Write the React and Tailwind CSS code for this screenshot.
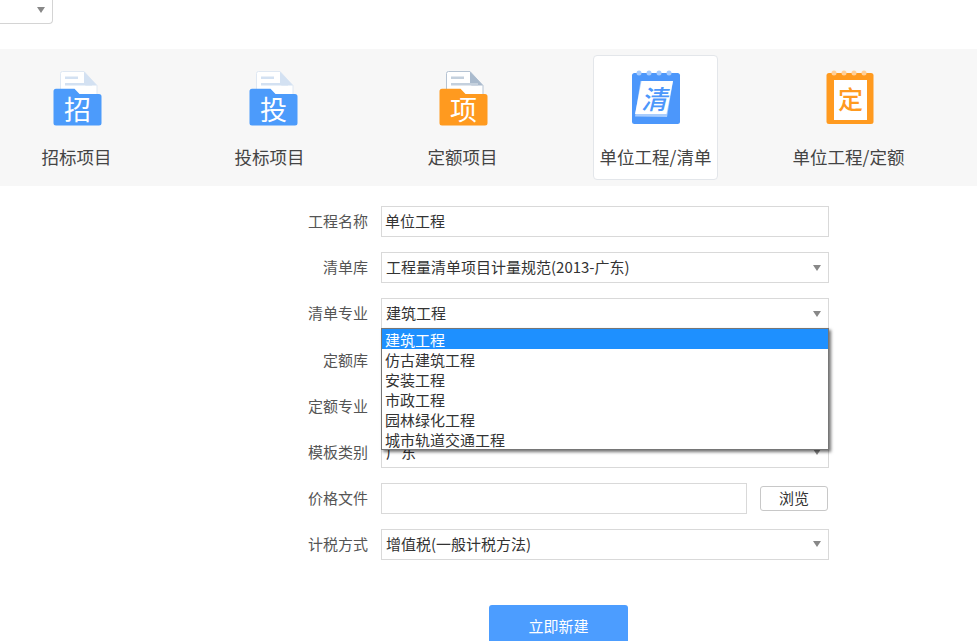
import React from 'react'

const FolderIcon = ({ glyph, main, edge, fold, line, className = '' }) => (
  <svg width="60" height="60" viewBox="0 0 60 60" className={className}>
    <path d="M15.5 3.5h21.5l13 14v20H13.5V5.5a2 2 0 0 1 2-2z" fill="#fff" stroke={edge} strokeWidth="1" />
    <path d="M37 3.5l13 14H39a2 2 0 0 1-2-2z" fill={fold} />
    <rect x="18" y="8.5" width="13" height="2.5" fill={line} />
    <rect x="18" y="15" width="27" height="2.5" fill={line} />
    <path d="M9 20.7h18.5l5 5.3h19.5a2.5 2.5 0 0 1 2.5 2.5V55a2.5 2.5 0 0 1-2.5 2.5H9A2.5 2.5 0 0 1 6.5 55V23.2a2.5 2.5 0 0 1 2.5-2.5z" fill={main} />
    <text x="30.5" y="52" textAnchor="middle" fontSize="27" fill="#fff" fontFamily="'Noto Sans CJK SC', sans-serif">{glyph}</text>
  </svg>
)

const Rings = ({ fill, xs }) => xs.map((x) => <circle key={x} cx={x} cy="5" r="2.5" fill={fill} />)

const ListIcon = () => (
  <svg width="60" height="60" viewBox="0 0 60 60">
    <rect x="6" y="5" width="48" height="51" rx="2.5" fill="#4c97fb" />
    <Rings fill="#a6cbfd" xs={[13, 23, 33, 43]} />
    <path d="M9 48.5 14.5 13H47L41 49z" fill="#a9cdfd" />
    <path d="M9 46 15.5 13H47l-6.5 33z" fill="#fff" />
    <text x="28" y="41" textAnchor="middle" fontSize="26" fontStyle="italic" fontWeight="500" fill="#4c97fb" fontFamily="'Noto Sans CJK SC', sans-serif">清</text>
  </svg>
)

const QuotaIcon = () => (
  <svg width="60" height="60" viewBox="0 0 60 60" className="ml-[2px]">
    <rect x="6.5" y="5" width="47" height="51" rx="2.5" fill="#ff9a1f" />
    <Rings fill="#ffd09a" xs={[14, 24, 34, 44]} />
    <rect x="14" y="12" width="33" height="40" fill="#fff" />
    <text x="30.5" y="41" textAnchor="middle" fontSize="25" fontWeight="500" fill="#ff9a1f" fontFamily="'Noto Sans CJK SC', sans-serif">定</text>
  </svg>
)

const Arrow = () => (
  <svg width="8" height="6" viewBox="0 0 8 6" className="shrink-0">
    <polygon points="0,0 8,0 4,6" fill="#888888" />
  </svg>
)

const tabs = [
  { label: '招标项目', icon: <FolderIcon glyph="招" main="#4c9bfb" edge="#dfe8f3" fold="#d3e1f2" line="#d3e1f2" /> },
  { label: '投标项目', icon: <FolderIcon glyph="投" main="#4c9bfb" edge="#dfe8f3" fold="#d3e1f2" line="#d3e1f2" className="ml-[7px]" /> },
  { label: '定额项目', icon: <FolderIcon glyph="项" main="#ff9a1f" edge="#b5c3d3" fold="#a9bacd" line="#c4d0dd" /> },
  { label: '单位工程/清单', icon: <ListIcon />, active: true },
  { label: '单位工程/定额', icon: <QuotaIcon /> },
]

const options = ['建筑工程', '仿古建筑工程', '安装工程', '市政工程', '园林绿化工程', '城市轨道交通工程']

const Row = ({ label, children }) => (
  <div className="flex items-center h-[31px] gap-[13px]">
    <span className="w-[60px] text-right text-[#555]">{label}</span>
    {children}
  </div>
)

const Select = ({ value }) => (
  <div className="flex-1 h-full border border-[#d9d9d9] bg-white flex items-center justify-between pl-[4px] pr-[7px]">
    <span>{value}</span>
    <Arrow />
  </div>
)

export default function App() {
  return (
    <div className="w-[977px] h-[641px] overflow-hidden bg-white text-[15px] text-[#333] font-['Noto_Sans_CJK_SC',sans-serif]">
      <div className="h-[49px]">
        <div className="w-[53px] h-[24px] border-r border-b border-[#d4d4d4] rounded-br-[4px] flex items-center justify-end pr-[7px] pb-[4px]">
          <Arrow />
        </div>
      </div>

      <div className="h-[137px] bg-[#f7f7f7] flex gap-[68px] pl-[14px] pt-[6px]">
        {tabs.map((t) => (
          <div
            key={t.label}
            className={`w-[125px] h-[125px] shrink-0 flex flex-col items-center pt-[12px] rounded-[4px] border ${t.active ? 'bg-white border-[#e3e6ea]' : 'border-transparent'}`}
          >
            {t.icon}
            <span className="mt-[16px] text-[17.5px] leading-[26px] whitespace-nowrap text-[#444]">{t.label}</span>
          </div>
        ))}
      </div>

      <div className="ml-[308px] w-[521px] mt-[20px] flex flex-col gap-[15.12px]">
        <Row label="工程名称">
          <div className="flex-1 h-full border border-[#d9d9d9] flex items-center pl-[3px]">单位工程</div>
        </Row>
        <Row label="清单库"><Select value="工程量清单项目计量规范(2013-广东)" /></Row>
        <div className="relative">
          <Row label="清单专业"><Select value="建筑工程" /></Row>
          <div className="absolute z-10 left-[73px] top-[30px] w-[448px] border border-[#767676] bg-white shadow-[2px_2px_3px_rgba(0,0,0,0.55)] leading-[21px]">
            {options.map((o, i) => (
              <div key={o} className={`h-[20px] pl-[3px] ${i === 0 ? 'bg-[#1e90ff] text-white' : ''}`}>{o}</div>
            ))}
          </div>
        </div>
        <Row label="定额库"><Select value="" /></Row>
        <Row label="定额专业"><Select value="" /></Row>
        <Row label="模板类别"><Select value="广东" /></Row>
        <Row label="价格文件">
          <div className="w-[366px] h-full border border-[#d9d9d9]" />
          <button className="w-[68px] h-[25px] border border-[#c8c8c8] rounded-[3px] bg-white text-[#333]">浏览</button>
        </Row>
        <Row label="计税方式"><Select value="增值税(一般计税方法)" /></Row>
      </div>

      <button className="block ml-[489px] mt-[45px] w-[139px] h-[42px] rounded-[3px] bg-[#4c9dff] text-white">立即新建</button>
    </div>
  )
}
